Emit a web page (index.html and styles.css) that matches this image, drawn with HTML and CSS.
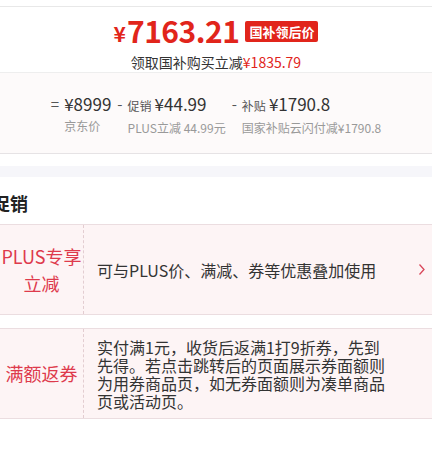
FILE: index.html
```html
<!DOCTYPE html>
<html lang="zh-CN">
<head>
    <meta charset="UTF-8">
    <meta name="viewport" content="width=device-width, initial-scale=1.0">
    <title>促销</title>
    <link rel="stylesheet" href="styles.css">
</head>
<body>
    <div class="top-gap"></div>

    <!-- 到手价 -->
    <div class="price-card">
        <div class="price-main">
            <span class="yen">¥</span><span class="amount">7163.21</span>
            <span class="badge">国补领后价</span>
        </div>
        <div class="price-sub">领取国补购买立减<em>¥1835.79</em></div>
    </div>

    <!-- 价格计算 -->
    <div class="calc">
        <div class="calc-col">
            <span class="op">=</span>
            <span class="val">¥8999</span>
            <span class="desc">京东价</span>
        </div>
        <div class="calc-col">
            <span class="op">-</span>
            <span class="val"><small>促销</small>¥44.99</span>
            <span class="desc">PLUS立减 44.99元</span>
        </div>
        <div class="calc-col">
            <span class="op">-</span>
            <span class="val"><small>补贴</small>¥1790.8</span>
            <span class="desc">国家补贴云闪付减¥1790.8</span>
        </div>
    </div>

    <div class="band"></div>

    <!-- 促销 -->
    <div class="promo">
        <h3 class="promo-title">促销</h3>

        <div class="promo-row">
            <div class="promo-label">PLUS专享<br>立减</div>
            <div class="promo-text">可与PLUS价、满减、券等优惠叠加使用</div>
            <svg class="arrow" width="8" height="13" viewBox="0 0 8 13">
                <polyline points="1.5,1.5 6,6.5 1.5,11.5" fill="none" stroke="#d9475a" stroke-width="1.3"/>
            </svg>
        </div>

        <div class="promo-row">
            <div class="promo-label">满额返券</div>
            <div class="promo-text">实付满1元，收货后返满1打9折券，先到先得。若点击跳转后的页面展示券面额则为用券商品页，如无券面额则为凑单商品页或活动页。</div>
        </div>
    </div>
</body>
</html>
```

FILE: styles.css
```css
body {
    margin: 0;
    background: #fff;
    font-family: "Noto Sans CJK SC", "Noto Sans", sans-serif;
    color: #333;
}

.top-gap {
    height: 6px;
}

.price-card {
    border-top: 1px solid #e8e8e8;
    border-bottom: 1px solid #eeeeee;
    height: 65px;
    text-align: center;
}

.price-main {
    display: flex;
    justify-content: center;
    align-items: center;
    height: 46px;
    color: #e1251b;
}

.yen {
    font-size: 21px;
    font-weight: bold;
    margin-right: 1px;
    margin-top: 6px;
}

.amount {
    font-size: 30px;
    font-weight: bold;
    letter-spacing: -0.5px;
}

.badge {
    margin-left: 6px;
    margin-top: 3px;
    background: #e1251b;
    color: #fff;
    font-size: 13px;
    font-weight: bold;
    line-height: 21px;
    padding: 0 4px;
    border-radius: 2px;
}

.price-sub {
    font-size: 14px;
    line-height: 18px;
    color: #333;
}

.price-sub em {
    font-style: normal;
    color: #e1251b;
}

.calc {
    background: #fdfafa;
    border-bottom: 1px solid #e6e3e5;
    height: 81px;
    box-sizing: border-box;
    padding-top: 19px;
    display: flex;
    justify-content: center;
    gap: 6px;
}

.calc-col {
    display: grid;
    grid-template-columns: auto auto;
    column-gap: 5px;
    align-content: start;
}

.op {
    color: #555;
    font-size: 15px;
    line-height: 24px;
}

.val {
    font-size: 17px;
    line-height: 24px;
    color: #333;
}

.val small {
    font-size: 12px;
    color: #555;
    margin-right: 3px;
}

.desc {
    grid-column: 2;
    font-size: 12px;
    line-height: 18px;
    margin-top: 1px;
    color: #999;
}

.band {
    height: 11px;
    margin-top: 12px;
    background: #f6f6fa;
}

.promo-title {
    margin: 0 0 0 -8px;
    font-size: 18px;
    font-weight: bold;
    line-height: 42px;
    padding-top: 5px;
    color: #222;
}

.promo-row {
    display: flex;
    align-items: center;
    min-height: 89px;
    background: #fdf4f5;
    border-top: 1px solid #ebdde0;
    border-bottom: 1px solid #ebdde0;
    margin-bottom: 13px;
}

.promo-label {
    width: 83px;
    align-self: stretch;
    display: flex;
    align-items: center;
    justify-content: center;
    text-align: center;
    border-right: 1px dashed #e3cdd1;
    color: #de3a4c;
    font-size: 18px;
    line-height: 27px;
}

.promo-text {
    width: 292px;
    padding: 8px 0 8px 13px;
    font-size: 16px;
    line-height: 18px;
    color: #333;
}

.arrow {
    margin-left: auto;
    margin-right: 6px;
}
```
